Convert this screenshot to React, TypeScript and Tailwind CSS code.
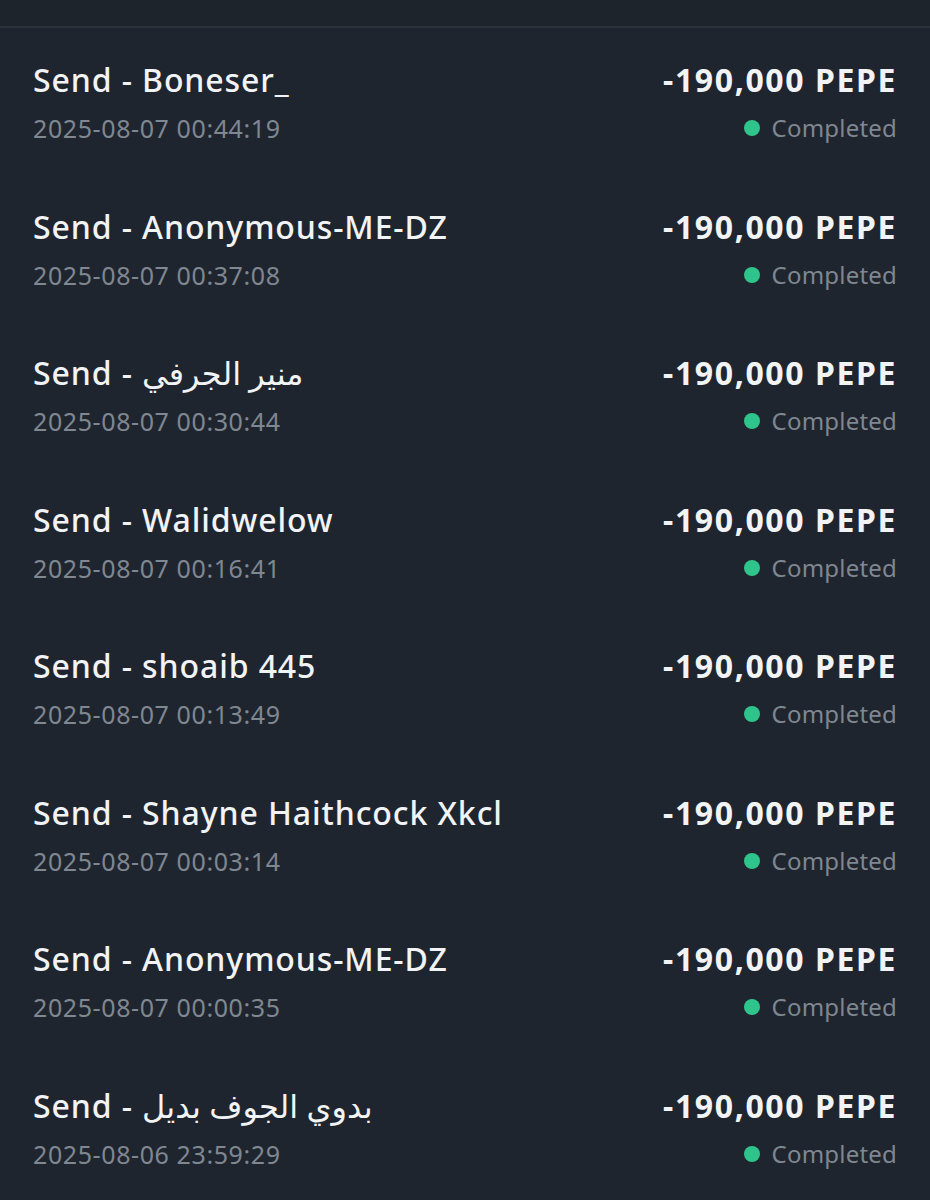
const rows = [
  { name: "Boneser_", time: "2025-08-07 00:44:19" },
  { name: "Anonymous-ME-DZ", time: "2025-08-07 00:37:08" },
  { name: "منير الجرفي", time: "2025-08-07 00:30:44" },
  { name: "Walidwelow", time: "2025-08-07 00:16:41" },
  { name: "shoaib 445", time: "2025-08-07 00:13:49" },
  { name: "Shayne Haithcock Xkcl", time: "2025-08-07 00:03:14" },
  { name: "Anonymous-ME-DZ", time: "2025-08-07 00:00:35" },
  { name: "بدوي الجوف بديل", time: "2025-08-06 23:59:29" },
]

export default function App() {
  return (
    <div className="w-[930px] h-[1200px] overflow-hidden bg-[#1f252e] font-['Noto_Sans','DejaVu_Sans',sans-serif]">
      <div className="h-[28px] bg-[#1e242c] border-b-2 border-[#2a313b]" />
      <div className="flex flex-col">
        {rows.map((row, i) => (
          <div key={i} className="h-[146.5px] flex items-center justify-between px-[33px] pt-[2px]">
            <div className="flex flex-col gap-[16px]">
              <p className="text-[32px] leading-[36px] font-medium tracking-[0.9px] text-[#f1f3f5]">
                Send - {row.name}
              </p>
              <p className="text-[25px] leading-[28px] tracking-[0.6px] text-[#7f8791]">{row.time}</p>
            </div>
            <div className="flex flex-col items-end gap-[16px]">
              <p className="text-[32px] leading-[36px] font-bold tracking-[1.6px] text-[#f1f3f5]">-190,000 PEPE</p>
              <div className="flex items-center gap-[12px]">
                <span className="w-[16px] h-[16px] rounded-full bg-[#2fc48b]" />
                <p className="text-[24px] leading-[28px] tracking-[0.2px] text-[#7f8791]">Completed</p>
              </div>
            </div>
          </div>
        ))}
      </div>
    </div>
  )
}
